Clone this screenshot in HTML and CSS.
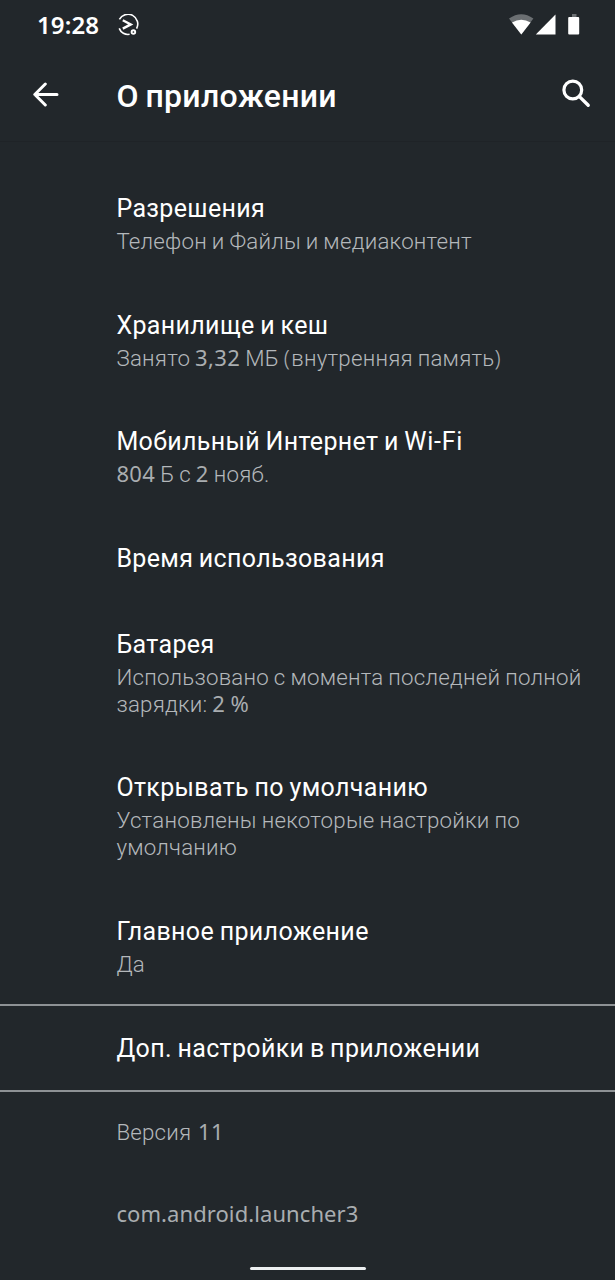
FILE: index.html
```html
<!DOCTYPE html>
<html lang="ru">
<head>
<meta charset="utf-8">
<title>О приложении</title>
<link rel="stylesheet" href="styles.css">
</head>
<body>
<div class="screen">
  <div class="status-bar">
    <span class="clock">19:28</span>
    <svg class="notification" width="22" height="22" viewBox="0 0 22 22" fill="none" stroke="currentColor" stroke-width="1.6">
      <path d="M1.4 5.4A9.4 9.4 0 0 1 18.6 14.6M1.2 14.4A9.4 9.4 0 0 0 11.6 20.3"/>
      <path d="M4.8 6.2 12.8 10.4 4.8 14.6" stroke-width="2.4"/>
      <circle cx="15.4" cy="18" r="1.8" stroke-width="1.9"/>
    </svg>
    <svg class="system-icons" width="72" height="22" viewBox="0 0 72 22" fill="#fff">
      <path d="M0 4.6Q12.3-4.2 24.4 4.6L12.3 20.5Z" fill="#6b6f72"/>
      <path d="M3 8.6Q12.3 2.8 21.6 8.6L12.3 20.5Z"/>
      <path d="M46.5.5V20.5H26.8Z"/>
      <path d="M63 0h4.5v3H63z" fill="#6b6f72"/>
      <rect x="59.2" y="3" width="11" height="17.5" rx="1"/>
    </svg>
  </div>
  <header class="toolbar">
    <svg class="back" width="28" height="26" viewBox="0 0 28 26" fill="none" stroke="currentColor" stroke-width="3" stroke-linecap="round" stroke-linejoin="round">
      <path d="M25 13.5H3M13.3 3 2.8 13.5l10.5 10.5"/>
    </svg>
    <h1 class="heading">О приложении</h1>
    <svg class="search" width="30" height="30" viewBox="0 0 30 30" fill="none" stroke="currentColor" stroke-width="3.2" stroke-linecap="round">
      <circle cx="11.8" cy="11" r="8.9"/>
      <path d="M18.2 17.4 27.2 26.2" stroke-width="3.4"/>
    </svg>
  </header>
  <main class="list">
    <section class="item"><h2 class="title">Разрешения</h2><p class="summary">Телефон и Файлы и медиаконтент</p></section>
    <section class="item"><h2 class="title">Хранилище и кеш</h2><p class="summary">Занято <span class="latin number">3,32</span> МБ <span class="latin paren">(</span>внутренняя память<span class="latin paren">)</span></p></section>
    <section class="item"><h2 class="title">Мобильный Интернет и <span class="wifi">Wi-Fi</span></h2><p class="summary"><span class="latin number">804</span> Б с <span class="latin number">2</span> нояб.</p></section>
    <section class="item"><h2 class="title">Время использования</h2></section>
    <section class="item"><h2 class="title">Батарея</h2><p class="summary">Использовано с момента последней полной<br>зарядки: <span class="latin number">2 %</span></p></section>
    <section class="item"><h2 class="title">Открывать по умолчанию</h2><p class="summary">Установлены некоторые настройки по<br>умолчанию</p></section>
    <section class="item"><h2 class="title">Главное приложение</h2><p class="summary">Да</p></section>
    <section class="item divided"><h2 class="title">Доп. настройки в приложении</h2></section>
  </main>
  <footer class="details">
    <p class="summary version">Версия <span class="latin number">11</span></p>
    <p class="summary"><span class="latin">com.android.launcher3</span></p>
  </footer>
  <div class="home-indicator"></div>
</div>
</body>
</html>
```
FILE: styles.css
```css
* { box-sizing: border-box; }
body { margin: 0; background: #22272b; color: #fff; font-family: Roboto, "Noto Sans", sans-serif; }
h1, h2, p { margin: 0; }
svg { display: block; flex: none; }
.screen { width: 615px; height: 1280px; overflow: hidden; display: flex; flex-direction: column; background: #22272b; }
.status-bar { height: 50px; flex: none; display: flex; align-items: center; padding: 0 34px 0 37px; }
.clock { width: 81px; font: 600 24px/30px "Noto Sans", sans-serif; letter-spacing: 0.1px; }
.system-icons { margin-left: auto; }
.toolbar { height: 92px; flex: none; display: flex; align-items: center; padding: 0 24px 3px 32px; border-bottom: 1px solid #1f2327; }
.back { margin-right: 56.6px; }
.heading { font-size: 32px; line-height: 40px; font-weight: 500; letter-spacing: 0.3px; word-spacing: -1.7px; padding-top: 4px; }
.search { margin-left: auto; }
.list { padding-top: 24px; flex: none; }
.item { padding: 28px 20px 28px 116.4px; }
.title { font-size: 25px; line-height: 30px; font-weight: 400; letter-spacing: 0.35px; word-spacing: -1px; white-space: nowrap; }
.wifi { letter-spacing: 0.7px; }
.summary { font-size: 22.3px; line-height: 27px; font-weight: 300; letter-spacing: 0.22px; word-spacing: -0.8px; color: #b4b8bb; white-space: nowrap; }
.title + .summary { margin-top: 4px; margin-bottom: -0.4px; }
.latin { font-family: "Noto Sans", sans-serif; font-size: 22px; font-weight: 400; line-height: 0; letter-spacing: 0.08px; color: #a9adb0; }
.number { letter-spacing: 0.4px; }
.paren { font-weight: 300; letter-spacing: 1.3px; }
.version { word-spacing: 1px; }
.divided { height: 88px; margin-top: -2px; padding-top: 28px; border-top: 2px solid #8e9295; border-bottom: 2px solid #8e9295; }
.details { padding: 27px 20px 0 116.4px; display: flex; flex-direction: column; gap: 55px; }
.home-indicator { width: 116px; height: 3px; margin: auto auto 10px; border-radius: 2px; background: #eceff1; }
```
